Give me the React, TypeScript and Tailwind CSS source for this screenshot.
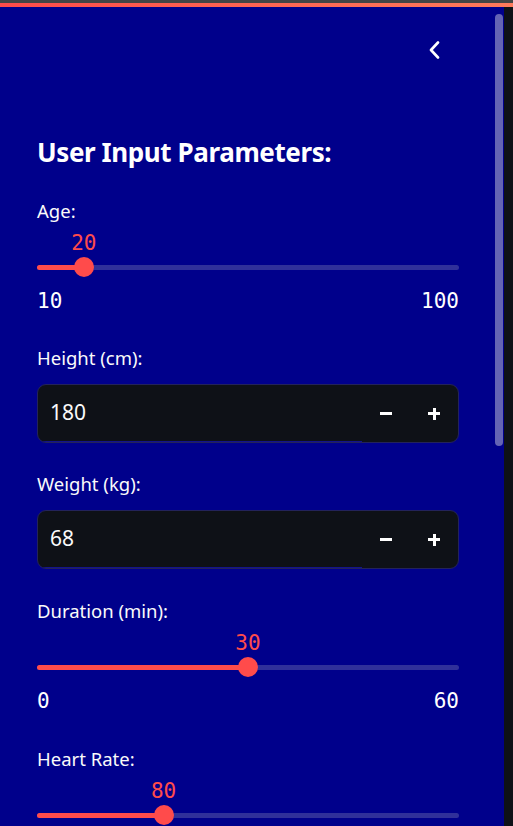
import React from "react";

const SANS = { fontFamily: '"Noto Sans", "Open Sans", sans-serif' };
const MONO = { fontFamily: '"DejaVu Sans Mono", "Liberation Mono", monospace' };

function Slider({
  min,
  max,
  value,
  mt,
  showRange = true,
}: {
  min: number;
  max: number;
  value: number;
  mt: string;
  showRange?: boolean;
}) {
  const pct = (value - min) / (max - min);
  const left = `${pct * 100}%`;
  return (
    <div className={`${mt} flex shrink-0 flex-col`}>
      <div className="relative h-[24px]">
        <span
          className="absolute top-0 -translate-x-1/2 text-[21px] leading-[24px] text-[#ff4b4b]"
          style={{ ...MONO, left }}
        >
          {value}
        </span>
      </div>
      <div className="relative flex h-[24px] items-center">
        <div className="h-[5px] w-full rounded-full bg-[#30309a]" />
        <div className="absolute left-0 h-[5px] rounded-full bg-[#ff4b4b]" style={{ width: left }} />
        <div
          className="absolute h-[20px] w-[20px] -translate-x-1/2 rounded-full bg-[#ff4b4b]"
          style={{ left }}
        />
      </div>
      {showRange && (
        <div className="mt-[10px] flex h-[24px] justify-between text-[21px] leading-[24px] text-white" style={MONO}>
          <span>{min}</span>
          <span>{max}</span>
        </div>
      )}
    </div>
  );
}

function Label({ text, mt }: { text: string; mt: string }) {
  return (
    <div className={`${mt} h-[24px] shrink-0 text-[18.5px] leading-[24px] text-[#fafafa]`} style={SANS}>
      {text}
    </div>
  );
}

function NumberInput({ value }: { value: number }) {
  return (
    <div className="mt-[14px] flex h-[59px] shrink-0 overflow-hidden rounded-[9px] border border-[#23235a] bg-[#0e1117]">
      <div
        className="flex flex-1 items-center border-b border-[#14148a] pl-[12px] text-[21px] text-[#fafafa]"
        style={SANS}
      >
        {value}
      </div>
      <div className="flex w-[48px] items-center justify-center">
        <div className="h-[3px] w-[12px] bg-white" />
      </div>
      <div className="relative flex w-[48px] items-center justify-center">
        <div className="h-[3px] w-[12px] bg-white" />
        <div className="absolute h-[12px] w-[3px] bg-white" />
      </div>
    </div>
  );
}

export default function App() {
  return (
    <div className="flex h-[826px] w-[513px] flex-col overflow-hidden bg-[#0e1117]">
      <div className="h-[3px] w-full shrink-0 bg-[#454545]" />
      <div className="h-[4px] w-full shrink-0 bg-linear-to-r from-[#ff4b4b] to-[#ff7a5c]" />
      <div className="flex min-h-0 flex-1 overflow-hidden">
        <div className="relative w-[504px] overflow-hidden bg-[#00008b]">
          <div className="absolute right-[1px] top-[7px] h-[432px] w-[8px] rounded-full bg-[#6464b4]" />
          <div className="flex flex-col pl-[37px] pr-[45px]">
            <div className="mt-[35px] flex h-[16px] shrink-0 justify-end pr-[19px]">
              <svg width="12" height="18" viewBox="0 0 12 18" className="-mt-[1px]">
                <polyline
                  points="10,1.5 3,9 10,16.5"
                  fill="none"
                  stroke="white"
                  strokeWidth="2.6"
                  strokeLinecap="round"
                  strokeLinejoin="round"
                />
              </svg>
            </div>
            <h3
              className="mt-[76px] h-[36px] shrink-0 text-[26px] font-bold leading-[36px] tracking-[-0.4px] text-white"
              style={SANS}
            >
              User Input Parameters:
            </h3>
            <Label text="Age:" mt="mt-[29px]" />
            <Slider min={10} max={100} value={20} mt="mt-[8px]" />
            <Label text="Height (cm):" mt="mt-[33px]" />
            <NumberInput value={180} />
            <Label text="Weight (kg):" mt="mt-[29px]" />
            <NumberInput value={68} />
            <Label text="Duration (min):" mt="mt-[30px]" />
            <Slider min={0} max={60} value={30} mt="mt-[8px]" />
            <Label text="Heart Rate:" mt="mt-[34px]" />
            <Slider min={50} max={150} value={80} mt="mt-[8px]" showRange={false} />
          </div>
        </div>
        <div className="flex-1 bg-[#0e1117]" />
      </div>
    </div>
  );
}
